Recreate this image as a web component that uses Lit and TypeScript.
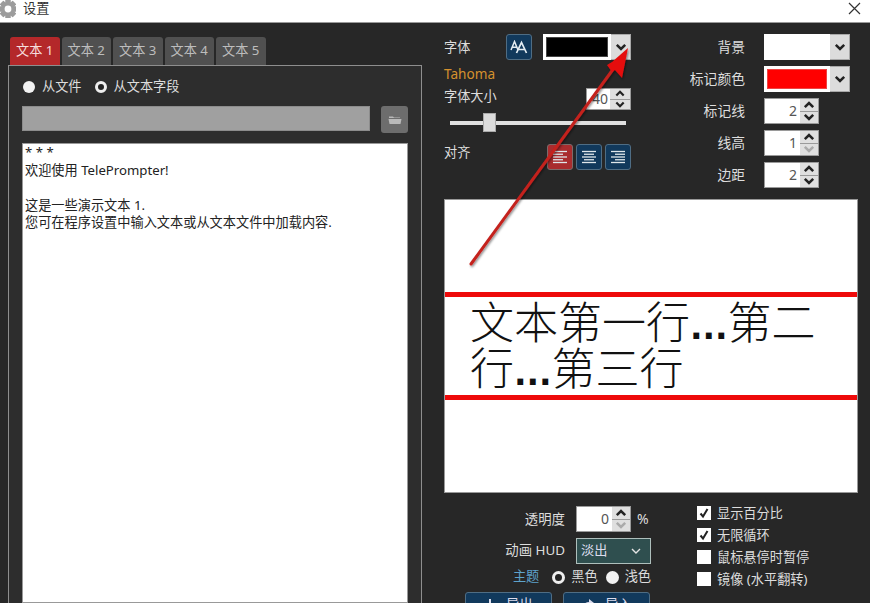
import { LitElement, html, css, svg } from "lit";
import { customElement } from "lit/decorators.js";

const chevron = (cls = "") => html`<svg class="chev ${cls}" viewBox="0 0 12 8" width="12" height="8"><path d="M1.8 1.8 L6 6 L10.2 1.8" fill="none" stroke="currentColor" stroke-width="2.5"/></svg>`;

const alignIcon = (xs: number[][]) => html`<svg viewBox="0 0 16 14" width="16" height="14">${xs.map(
  ([a, b], i) => svg`<line x1=${a} x2=${b} y1=${1.5 + i * 2.75} y2=${1.5 + i * 2.75} stroke="#dfe6ea" stroke-width="1.3"/>`
)}</svg>`;

@customElement("app-root")
export class AppRoot extends LitElement {
  static styles = css`
    :host { display: block; width: 870px; height: 603px; overflow: hidden; font-family: "Noto Sans", "Noto Sans CJK SC", sans-serif; font-size: 13.2px; line-height: 16px; color: #ddd; }
    * { box-sizing: border-box; }
    .app { position: relative; width: 870px; height: 603px; display: flex; flex-direction: column; overflow: hidden; background: #272727; }
    .titlebar { height: 23px; flex: none; background: #fff; border-bottom: 1px solid #9a9a9a; display: flex; align-items: flex-start; color: #333; line-height: 16px; }
    .gear { margin: 0 7px 0 0; flex: none; }
    .title-text { flex: 1; }
    .close { margin: 2px 9px 0 0; }
    .body { flex: 1; min-height: 0; display: flex; overflow: hidden; }
    .left { width: 422px; flex: none; padding: 14px 0 0 8px; display: flex; flex-direction: column; }
    .tabs { display: flex; gap: 2px; padding-left: 2px; height: 28px; flex: none; }
    .tab { width: 49.5px; border-radius: 3px 3px 0 0; background: #505050; color: #bdbdbd; display: flex; align-items: center; justify-content: center; white-space: nowrap; padding-bottom: 3px; }
    .tab.on { background: #b4282a; color: #f6dede; }
    .panel { flex: 1; min-height: 0; background: #2d2d2d; border: 1px solid #8e8e8e; border-bottom: none; padding: 12px 13px 0; display: flex; flex-direction: column; }
    .radios { display: flex; align-items: center; height: 18px; flex: none; padding-left: 1px; }
    .radio { width: 12px; height: 12px; border-radius: 50%; background: #f2f2f2; flex: none; }
    .radio.on { background: #222; border: 3px solid #eee; }
    .rlabel { margin-left: 7px; margin-bottom: 2px; white-space: nowrap; }
    .r2 { margin-left: 13px; }
    .filerow { display: flex; justify-content: space-between; margin-top: 10px; height: 26px; flex: none; }
    .fileinput { width: 348px; height: 25px; background: #a0a0a0; border: 1px solid #8c8c8c; }
    .filebtn { width: 27px; height: 27px; background: #6d6d6d; border-radius: 3px; display: flex; align-items: center; justify-content: center; }
    .textarea { flex: 1; margin-top: 11px; background: #fff; border: 1px solid #999; color: #222; padding: 0 2px; font-size: 13.2px; line-height: 17.6px; white-space: pre; }
    .right { width: 414px; margin-left: 22px; padding-top: 11px; flex: none; display: flex; flex-direction: column; }
    .top { display: flex; justify-content: space-between; height: 154px; flex: none; padding-right: 8px; }
    .cluster { width: 187px; display: flex; flex-direction: column; }
    .row1 { display: flex; align-items: center; height: 26px; flex: none; }
    .row1 .lbl { width: 62px; margin-bottom: 1px; }
    .iconbtn { width: 26px; height: 26px; background: #11395c; border: 1px solid #4f6d84; border-radius: 3px; display: flex; align-items: center; justify-content: center; flex: none; }
    .iconbtn.red { background: #a92c2e; border-color: #7c6a6a; }
    .colorsel { width: 86px; height: 26px; display: flex; background: #fff; flex: none; }
    .colorsel.lg { margin-left: 11px; width: 88px; }
    .swatch { flex: 1; margin: 3px; background: #000; border: 1px solid #444; }
    .swatch.red { background: #f00; border-color: #e44; }
    .swatch.white { background: #fff; border: none; }
    .drop { width: 20px; background: #dcdcdc; border: 1px solid #a8a8a8; border-width: 1px 1px 1px 0; color: #222; display: flex; align-items: center; justify-content: center; }
    .fontname { color: #d5912e; height: 16px; line-height: 16px; margin-top: 6px; flex: none; font-size: 13.6px; }
    .row2 { display: flex; justify-content: space-between; margin-top: 6px; height: 21px; flex: none; }
    .spin { display: flex; width: 55px; height: 26px; background: #fff; border: 1px solid #9a9a9a; flex: none; color: #555; }
    .spin .val { flex: 1; text-align: right; padding-right: 3px; line-height: 23px; font-size: 14px; }
    .spin .btns { width: 18px; display: flex; flex-direction: column; background: #9a9a9a; gap: 1px; }
    .spin .btns span { flex: 1; background: #dfdfdf; color: #222; display: flex; align-items: center; justify-content: center; }
    .spin .btns span.dis { color: #aaa; }
    .spin.small { width: 45px; height: 22px; }
    .spin.small .val { line-height: 19px; padding-right: 2px; }
    .spin.small .btns { width: 20px; }
    .spin .chev { width: 12px; height: 8px; }
    .spin.small .chev { height: 7px; }
    .up { transform: scaleY(-1); }
    .slider { position: relative; height: 19px; margin: 4px 5px 0 6px; flex: none; display: flex; align-items: center; }
    .track { flex: 1; height: 4px; background: #e0e0e0; }
    .thumb { position: absolute; left: 33px; top: 0; width: 13px; height: 19px; background: #dcdcdc; border: 1px solid #aaa; }
    .row3 { display: flex; justify-content: space-between; margin-top: 12px; height: 26px; flex: none; }
    .aligns { display: flex; gap: 3px; }
    .grid { width: 165px; display: grid; grid-template-columns: 60px 86px; column-gap: 19px; row-gap: 6px; grid-auto-rows: 26px; align-items: center; }
    .grid .k { text-align: right; white-space: nowrap; font-size: 13.8px; justify-self: end; margin-bottom: 1px; }
    .preview { margin-top: 11px; height: 294px; flex: none; background: #fff; border: 1px solid #999; padding-top: 92px; display: flex; flex-direction: column; }
    .redline { height: 5px; background: #ee0a0a; flex: none; }
    .ptext { height: 98px; flex: none; padding: 1px 0 0 25px; font-family: "Noto Sans CJK SC", sans-serif; font-weight: 300; font-size: 44px; line-height: 44px; color: #111; white-space: nowrap; }
    .dots { font-family: "DejaVu Sans", sans-serif; font-size: 33px; font-weight: 700; line-height: 1; }
    .bottom { display: flex; margin-top: 9px; flex: none; }
    .bl { width: 207px; padding-top: 4px; flex: none; display: flex; flex-direction: column; }
    .brow { display: flex; align-items: center; flex: none; }
    .brow .k { width: 121px; text-align: right; margin: 0 11px 1px 0; white-space: nowrap; font-size: 13.4px; }
    .hud .k { margin-bottom: 2px; }
    .pct { margin-left: 6px; font-size: 14px; }
    .hud { margin-top: 6px; }
    .sel { width: 75px; height: 26px; background: #2f4f4f; border: 1px solid #aebfbc; display: flex; align-items: center; justify-content: space-between; padding: 0 8px 0 4px; color: #dde; }
    .sel span { margin-bottom: 2px; }
    .theme { margin-top: 5px; height: 16px; }
    .theme .tk { width: 96px; text-align: right; margin: 0 13px 2px 0; color: #5ea3cc; }
    .theme .radio { width: 13px; height: 13px; }
    .theme .rlabel { margin-left: 6px; }
    .theme .r2 { margin-left: 8px; }
    .actions { display: flex; margin-top: 7px; padding-left: 21px; gap: 11px; }
    .action { width: 87px; height: 26px; background: #11395c; border: 1px solid #4f6d84; border-radius: 3px; display: flex; align-items: center; justify-content: center; gap: 10px; color: #dde; padding-bottom: 2px; }
    .br { margin-left: 46px; display: flex; flex-direction: column; }
    .check { height: 22px; display: flex; align-items: center; white-space: nowrap; }
    .check .t { margin-bottom: 1px; }
    .box { width: 14px; height: 14px; background: #fff; margin-right: 6px; display: flex; align-items: center; justify-content: center; flex: none; }
    .overlay { position: absolute; left: 0; top: 0; pointer-events: none; }
  `;

  private spin(v: string, downDisabled = false, small = false) {
    return html`<div class="spin ${small ? "small" : ""}"><div class="val">${v}</div><div class="btns"><span>${chevron("up")}</span><span class=${downDisabled ? "dis" : ""}>${chevron()}</span></div></div>`;
  }

  private gear() {
    const teeth = [0, 45, 90, 135, 180, 225, 270, 315];
    return html`<svg class="gear" width="16" height="18" viewBox="0 0 16 18">
      ${teeth.map((a) => svg`<rect x="6" y="0" width="5" height="18" fill="#9c9c9c" transform="rotate(${a} 8 9) translate(-.5 0)"/>`)}
      <circle cx="8" cy="9" r="7" fill="#9c9c9c"/><circle cx="8" cy="9" r="3.4" fill="#fff"/></svg>`;
  }

  private check(label: string, on: boolean) {
    return html`<div class="check"><span class="box">${on
      ? html`<svg width="12" height="12" viewBox="0 0 12 12"><path d="M2.5 6.5 L5 9.5 L9.5 2" fill="none" stroke="#222" stroke-width="2"/></svg>`
      : ""}</span><span class="t">${label}</span></div>`;
  }

  render() {
    return html`<div class="app">
      <div class="titlebar">
        ${this.gear()}
        <span class="title-text">设置</span>
        <svg class="close" width="13" height="13" viewBox="0 0 13 13"><path d="M1 1 L12 12 M12 1 L1 12" stroke="#333" stroke-width="1.2" fill="none"/></svg>
      </div>
      <div class="body">
        <div class="left">
          <div class="tabs">
            <div class="tab on">文本 1</div><div class="tab">文本 2</div><div class="tab">文本 3</div><div class="tab">文本 4</div><div class="tab">文本 5</div>
          </div>
          <div class="panel">
            <div class="radios">
              <span class="radio"></span><span class="rlabel">从文件</span>
              <span class="radio on r2"></span><span class="rlabel">从文本字段</span>
            </div>
            <div class="filerow">
              <div class="fileinput"></div>
              <div class="filebtn"><svg width="14" height="10" viewBox="0 0 14 10"><path d="M1 3 V1.5 H5 L6 2.5 H12 V3 Z M0.5 4 H13.5 L12.5 9 H1.5 Z" fill="#b9b9b9"/></svg></div>
            </div>
            <div class="textarea">* * *
欢迎使用 TelePrompter!

这是一些演示文本 1.
您可在程序设置中输入文本或从文本文件中加载内容.</div>
          </div>
        </div>
        <div class="right">
          <div class="top">
            <div class="cluster">
              <div class="row1">
                <span class="lbl">字体</span>
                <div class="iconbtn"><svg width="18" height="14" viewBox="0 0 18 14"><path d="M1 10 L4.5 1.5 L8 10 M2.3 7.2 H6.7" fill="none" stroke="#e4edf3" stroke-width="1.5"/><path d="M6.5 13 L11.5 2.5 L16.5 13 M8.3 9.5 H14.7" fill="none" stroke="#e4edf3" stroke-width="1.7"/></svg></div>
                <div class="colorsel lg"><div class="swatch"></div><div class="drop">${chevron()}</div></div>
              </div>
              <div class="fontname">Tahoma</div>
              <div class="row2"><span>字体大小</span>${this.spin("40", false, true)}</div>
              <div class="slider"><div class="track"></div><div class="thumb"></div></div>
              <div class="row3">
                <span>对齐</span>
                <div class="aligns">
                  <div class="iconbtn red">${alignIcon([[1, 15], [1, 11], [1, 15], [1, 11], [1, 15]])}</div>
                  <div class="iconbtn">${alignIcon([[1, 15], [3, 13], [1, 15], [3, 13], [1, 15]])}</div>
                  <div class="iconbtn">${alignIcon([[1, 15], [5, 15], [1, 15], [5, 15], [1, 15]])}</div>
                </div>
              </div>
            </div>
            <div class="grid">
              <span class="k">背景</span><div class="colorsel"><div class="swatch white"></div><div class="drop">${chevron()}</div></div>
              <span class="k">标记颜色</span><div class="colorsel"><div class="swatch red"></div><div class="drop">${chevron()}</div></div>
              <span class="k">标记线</span>${this.spin("2")}
              <span class="k">线高</span>${this.spin("1", true)}
              <span class="k">边距</span>${this.spin("2")}
            </div>
          </div>
          <div class="preview">
            <div class="redline"></div>
            <div class="ptext">文本第一行<span class="dots">...</span>第二<br />行<span class="dots">...</span>第三行</div>
            <div class="redline"></div>
          </div>
          <div class="bottom">
            <div class="bl">
              <div class="brow"><span class="k">透明度</span>${this.spin("0", true)}<span class="pct">%</span></div>
              <div class="brow hud"><span class="k">动画 HUD</span><div class="sel"><span>淡出</span><svg width="12" height="8" viewBox="0 0 12 8"><path d="M2 2 L6 6 L10 2" fill="none" stroke="#e4e4e4" stroke-width="1.4"/></svg></div></div>
              <div class="brow theme"><span class="tk">主题</span><span class="radio on"></span><span class="rlabel">黑色</span><span class="radio r2"></span><span class="rlabel">浅色</span></div>
              <div class="actions">
                <div class="action"><svg width="12" height="12" viewBox="0 0 12 12"><path d="M6 1 V9 M2 6 L6 10 L10 6" stroke="#dde" stroke-width="2" fill="none"/></svg>导出</div>
                <div class="action"><svg width="14" height="12" viewBox="0 0 14 12"><path d="M1 10 Q3 4 8 4 V1 L13 5 L8 9 V6 Q4 6 1 10 Z" fill="#dde"/></svg>导入</div>
              </div>
            </div>
            <div class="br">
              ${this.check("显示百分比", true)}
              ${this.check("无限循环", true)}
              ${this.check("鼠标悬停时暂停", false)}
              ${this.check("镜像 (水平翻转)", false)}
            </div>
          </div>
        </div>
      </div>
      <svg class="overlay" width="870" height="603" viewBox="0 0 870 603">
        <defs><filter id="s" x="-20%" y="-20%" width="140%" height="140%"><feDropShadow dx="1" dy="1.5" stdDeviation="1.2" flood-color="#000" flood-opacity=".45"/></filter></defs>
        <g filter="url(#s)">
          <line x1="471" y1="264" x2="614" y2="68" stroke="#c4201f" stroke-width="3" stroke-linecap="round"/>
          <polygon points="628,48 622,78 615,70 612,72 607,65 612,62" fill="#e50f0f"/>
        </g>
      </svg>
    </div>`;
  }
}
